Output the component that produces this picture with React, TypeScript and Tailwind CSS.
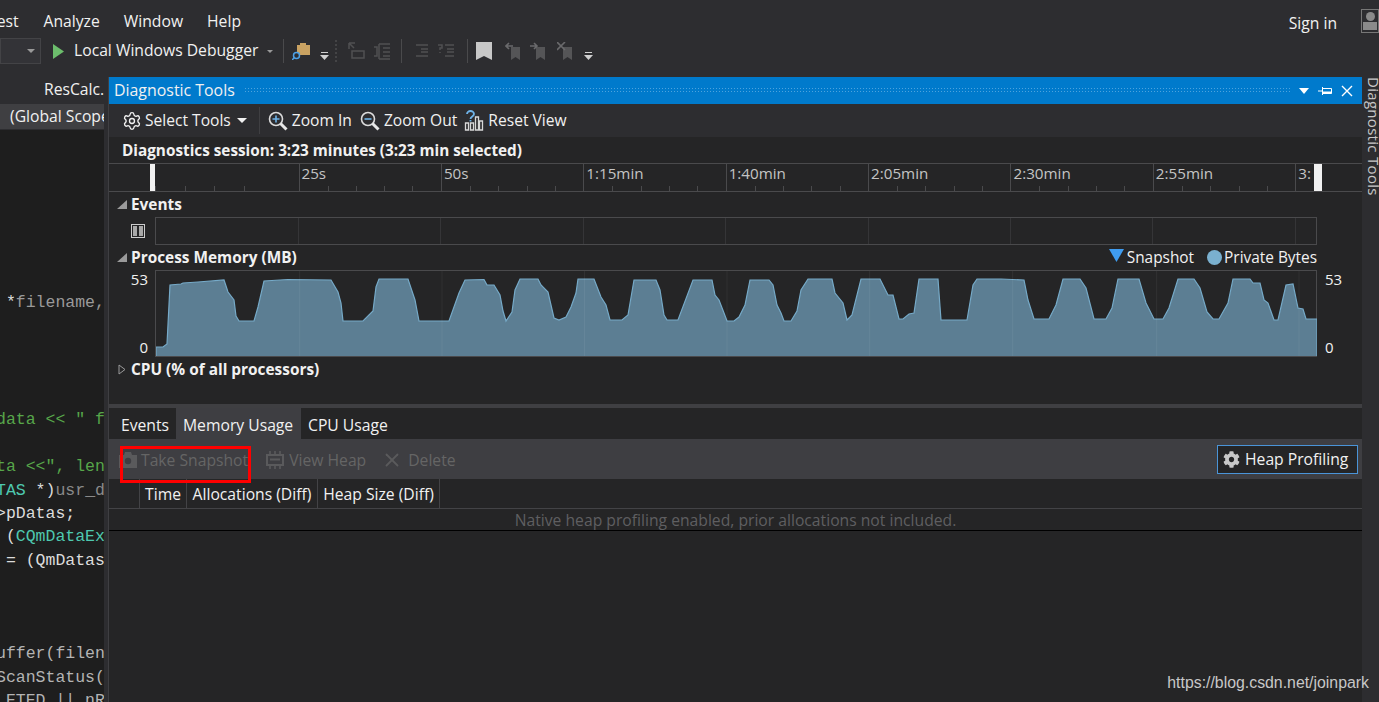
import { Settings, X } from "lucide-react";
import { FaCog } from "react-icons/fa";

const chartPoints =
    "155,356 155,347 162,347 166,344 169,285 180,284 182,283 197,282 223,280 227,292 233,300 235,316 238,321 253,321 257,307 263,281 287,279.5 330,280 337,292 340,303 342,321 362,321 372,311 375,287 378,279 407,279 414,300 418,321 448,321 458,293 464,280 483,279.5 486,285 493,285 499,295 502,311 505,321 511,312 514,290 519,279 537,279 540,285 547,292 553,318 558,320 565,317 570,307 575,293 577,279 593,279 600,297 605,305 609,320 621,320 627,315 633,280 655,280 659,290 663,315 666,320 677,320 692,280 711,280 714,295 718,300 723,313 726,321 733,321 738,317 744,305 749,280 768,280 772,285 776,305 780,313 783,321 790,321 796,311 800,290 807,279 831,279 834,293 842,303 846,320 851,315 860,279 879,279 887,295 892,295 898,319 902,319 908,314 913,313 918,279 937,279 940,320 966,320 972,285 976,279 1000,279 1023,280 1027,300 1033,319 1048,319 1055,305 1062,279 1079,279 1085,288 1093,319 1105,319 1111,308 1117,279 1138,279 1145,303 1153,319 1162,319 1168,308 1177,279 1193,279 1199,288 1206,312 1212,319 1218,319 1227,303 1232,279 1249,279 1252,283 1259,283 1263,300 1267,303 1273,320 1277,320 1285,285 1292,284 1297,308 1302,309 1305,319 1316,319 1316,356";

const rulerLabels = ["25s", "50s", "1:15min", "1:40min", "2:05min", "2:30min", "2:55min", "3:20min"];
const gridLines = [298.7, 441, 583.5, 726, 868.7, 1011.7, 1155.7, 1298];

function MiniCaret() {
    return (
        <svg width="9" height="8" viewBox="0 0 9 8">
            <rect x="1" y="0" width="7" height="1" fill="#d0d0d0" />
            <path d="M0 3h9L4.5 8z" fill="#d0d0d0" />
        </svg>
    );
}

function DimIcon({ d }: { d: string }) {
    return (
        <svg width="18" height="19" viewBox="0 0 18 19" fill="none" stroke="#505052" strokeWidth="1.5">
            <path d={d} />
        </svg>
    );
}

function NavBookmark({ mark }: { mark: string }) {
    return (
        <svg width="16" height="18" viewBox="0 0 16 18">
            <path d="M6 5h9v13l-4.5-3-4.5 3z" fill="#555557" />
            <path d={mark} stroke="#6a6a6c" strokeWidth="1.6" fill="none" />
        </svg>
    );
}

function Magnifier({ mark }: { mark: string }) {
    return (
        <svg width="20" height="20" viewBox="0 0 20 20" fill="none">
            <circle cx="8" cy="8" r="6.5" stroke="#dcdcdc" strokeWidth="1.6" />
            <path d="M12.5 12.5l6 6" stroke="#e8e8e8" strokeWidth="3" />
            <path d={mark} stroke="#6fb3e8" strokeWidth="1.6" />
        </svg>
    );
}

function BlankLines({ count }: { count: number }) {
    return <div style={{ height: count * 23.4 }} />;
}

function TopBars() {
    return (
        <div className="flex flex-col h-[66px] text-[#f1f1f1] text-[15.7px]">
            <div className="flex h-[36px] items-center pt-[8px]">
                <span className="-ml-[12px] mr-[25px]">Test</span>
                <span className="mr-[24px]">Analyze</span>
                <span className="mr-[24px]">Window</span>
                <span>Help</span>
                <span className="ml-auto mr-[24px] mt-[4px]">Sign in</span>
                <div className="w-[18px] h-[24px] -mt-[2px] border border-[#777777] bg-[#2d2d30] overflow-hidden flex flex-col items-center">
                    <div className="w-[9px] h-[9px] rounded-full bg-[#8a8a8a] mt-[2px]" />
                    <div className="w-[14px] h-[8px] bg-[#8a8a8a] mt-[1px]" />
                </div>
            </div>
            <div className="flex h-[30px] items-center">
                <div className="w-[41px] h-[26px] bg-[#333337] border border-[#434346] flex items-center justify-end pr-[5px]">
                    <div className="w-0 h-0 border-l-[4px] border-r-[4px] border-t-[4px] border-l-transparent border-r-transparent border-t-[#999999]" />
                </div>
                <svg width="11" height="15" viewBox="0 0 11 15" className="ml-[12px]">
                    <path d="M0 0l11 7.5L0 15z" fill="#6cbd6c" />
                </svg>
                <span className="ml-[10px] w-[187px] whitespace-nowrap">Local Windows Debugger</span>
                <div className="ml-[6px] w-0 h-0 border-l-[3px] border-r-[3px] border-t-[3px] border-l-transparent border-r-transparent border-t-[#999999]" />
                <div className="ml-[10px] w-px h-[24px] bg-[#4a4a4c]" />
                <svg width="19" height="18" viewBox="0 0 19 18" className="ml-[8px]">
                    <path d="M5 3h3V1h6v2h4v10H5z" fill="#c9a262" />
                    <circle cx="4.5" cy="13.5" r="3" fill="#2d2d30" stroke="#4ea1e6" strokeWidth="1.5" />
                    <path d="M2.5 15.5L0 18" stroke="#4ea1e6" strokeWidth="1.5" />
                </svg>
                <div className="ml-[9px] mt-[10px]">
                    <MiniCaret />
                </div>
                <div className="ml-[6px] w-[3px] h-[22px] border-l-2 border-dotted border-[#444446]" />
                <div className="ml-[9px]">
                    <DimIcon d="M2 1l5 5M2 1v6M2 1h6M5 9h12v7H5z" />
                </div>
                <div className="ml-[8px]">
                    <DimIcon d="M6 2h11M6 2v15M6 17h11M10 6h7M10 10h7M10 14h7M1 5h3v9H1" />
                </div>
                <div className="ml-[10px] w-px h-[24px] bg-[#4a4a4c]" />
                <div className="ml-[11px]">
                    <DimIcon d="M3 3h12M8 7h7M8 10h7M3 14h12" />
                </div>
                <div className="ml-[6px]">
                    <DimIcon d="M1 3h4v3H3v2M3 10v1M8 3h9M10 7h7M10 10h7M8 14h9" />
                </div>
                <div className="ml-[12px] w-px h-[24px] bg-[#4a4a4c]" />
                <svg width="16" height="18" viewBox="0 0 16 18" className="ml-[8px]">
                    <path d="M0 0h16v18l-8-4-8 4z" fill="#c8c8c8" />
                </svg>
                <div className="ml-[13px]">
                    <NavBookmark mark="M8 4H1M4 1L1 4l3 3" />
                </div>
                <div className="ml-[9px]">
                    <NavBookmark mark="M0 4h7M4 1l3 3-3 3" />
                </div>
                <div className="ml-[11px]">
                    <NavBookmark mark="M0 0l8 8M8 0L0 8" />
                </div>
                <div className="ml-[11px] mt-[10px]">
                    <MiniCaret />
                </div>
            </div>
        </div>
    );
}

function CodePane() {
    return (
        <div className="w-[108px] shrink-0 flex flex-col">
            <div className="h-[11px]" />
            <div className="w-[104px] h-[26px] pl-[44px] text-[#f1f1f1] text-[15.7px] whitespace-nowrap overflow-hidden leading-[24px]">
                ResCalc.cpp
            </div>
            <div className="w-[104px] h-[25px] mt-px bg-[#3f3f42] pl-[10px] text-[#f1f1f1] text-[15.7px] whitespace-nowrap overflow-hidden leading-[24px]">
                (Global Scope)
            </div>
            <div className="w-[104px] flex-1 mt-px bg-[#1e1e1e] overflow-hidden pt-[21px] font-['Liberation_Mono',monospace] text-[16.5px] leading-[23.4px] whitespace-pre text-[#dcdcdc]">
                <div className="-ml-[4px]">
                    <BlankLines count={6} />
                    <div>
                        {" "}
                        <span>*</span>
                        <span className="text-[#9a9a9a]">filename,</span>
                    </div>
                    <BlankLines count={4} />
                    <div className="text-[#57a64a]">data &lt;&lt; " f</div>
                    <BlankLines count={1} />
                    <div className="text-[#57a64a]">ta &lt;&lt;", len</div>
                    <div>
                        <span className="text-[#4ec9b0]">TAS</span> *)<span className="text-[#8a8a8a]">usr_d</span>
                    </div>
                    <div>&gt;pDatas;</div>
                    <div>
                        {" ("}
                        <span className="text-[#4ec9b0]">CQmDataEx</span>
                    </div>
                    <div> = (QmDatas</div>
                    <BlankLines count={3} />
                    <div className="text-[#b4b4b4]">uffer(filen</div>
                    <div className="text-[#b4b4b4]">ScanStatus(</div>
                    <div className="text-[#b4b4b4]"> ETED || nR</div>
                </div>
            </div>
        </div>
    );
}

function Ruler() {
    return (
        <div className="relative h-[29px] border-y border-[#4a4a4c] flex pl-[189.5px] text-[#c4c4c4] text-[15.2px] overflow-hidden">
            {rulerLabels.map((label, i) => (
                <div
                    key={label}
                    className={`relative shrink-0 border-l border-[#4a4a4c] pl-[2px] leading-[19px] ${i === 7 ? "w-[16px] overflow-hidden whitespace-nowrap" : "w-[142.4px]"}`}
                >
                    {label}
                    {i < 7 && (
                        <div className="absolute bottom-0 left-[28px] w-[86px] h-[5px] flex justify-between">
                            <div className="w-px bg-[#4a4a4c]" />
                            <div className="w-px bg-[#4a4a4c]" />
                            <div className="w-px bg-[#4a4a4c]" />
                            <div className="w-px bg-[#4a4a4c]" />
                        </div>
                    )}
                </div>
            ))}
            <div className="absolute left-[46px] top-0 bottom-0 w-[90px] flex justify-between items-end">
                <div className="w-px h-[5px] bg-[#4a4a4c]" />
                <div className="w-px h-[5px] bg-[#4a4a4c]" />
                <div className="w-px h-[5px] bg-[#4a4a4c]" />
                <div className="w-px h-[5px] bg-[#4a4a4c]" />
            </div>
            <div className="absolute left-[41px] top-0 bottom-0 w-[5px] bg-[#f1f1f1]" />
            <div className="absolute left-[1205px] top-0 bottom-0 w-[8px] bg-[#f1f1f1]" />
        </div>
    );
}

function SectionHead({ open, label }: { open: boolean; label: string }) {
    return (
        <div className="flex items-center pl-[8px] font-bold text-[15.4px] text-[#f1f1f1]">
            {open ? (
                <svg width="11" height="9" viewBox="0 0 11 9">
                    <path d="M10 0v9H0z" fill="#9a9a9a" />
                </svg>
            ) : (
                <svg width="9" height="11" viewBox="0 0 9 11" className="ml-[1px] mr-px">
                    <path d="M1 1l6 4.5L1 10z" fill="none" stroke="#9a9a9a" />
                </svg>
            )}
            <span className="ml-[3px] whitespace-nowrap">{label}</span>
        </div>
    );
}

function Timeline() {
    return (
        <div className="flex flex-col">
            <div className="h-[25px] flex items-center">
                <SectionHead open label="Events" />
            </div>
            <div className="flex h-[28px]">
                <div className="w-[46px] flex items-center justify-end pr-[10px]">
                    <div className="w-[14px] h-[14px] border border-[#cccccc] flex gap-[2px] p-px bg-[#252526]">
                        <div className="flex-1 bg-[#a8a8a8]" />
                        <div className="flex-1 bg-[#a8a8a8]" />
                    </div>
                </div>
                <div className="w-[1162px] border border-[#4a4a4c] flex">
                    <div className="w-[143px] border-r border-[#353537]" />
                    <div className="w-[142.4px] border-r border-[#353537]" />
                    <div className="w-[142.4px] border-r border-[#353537]" />
                    <div className="w-[142.4px] border-r border-[#353537]" />
                    <div className="w-[142.4px] border-r border-[#353537]" />
                    <div className="w-[142.4px] border-r border-[#353537]" />
                    <div className="w-[142.4px] border-r border-[#353537]" />
                    <div className="w-[142.4px] border-r border-[#353537]" />
                </div>
            </div>
            <div className="h-[25px] flex items-center">
                <SectionHead open label="Process Memory (MB)" />
                <div className="ml-auto mr-[45px] flex items-center text-[15.4px] text-[#f1f1f1]">
                    <svg width="15" height="13" viewBox="0 0 15 13" className="-mt-[3px]">
                        <path d="M0 0h15L7.5 13z" fill="#3f9cf0" />
                    </svg>
                    <span className="ml-[3px]">Snapshot</span>
                    <div className="ml-[13px] w-[15px] h-[15px] rounded-full bg-[#7ab0cf]" />
                    <span className="ml-[2px]">Private Bytes</span>
                </div>
            </div>
            <div className="flex h-[87px] text-[15px] text-[#f1f1f1]">
                <div className="w-[46px] flex flex-col justify-between items-end pr-[7px]">
                    <span className="leading-[18px]">53</span>
                    <span className="leading-[18px] mb-[1px]">0</span>
                </div>
                <div className="w-[1162px] border-y border-x border-[#4a4a4c]">
                    <svg width="1161" height="85" viewBox="155 271 1161 85" className="block">
                        <polygon points={chartPoints} fill="#5c7e93" stroke="none" />
                        <polyline points={chartPoints} fill="none" stroke="#76aac8" strokeWidth="1.2" />
                        {gridLines.map((x) => (
                            <line key={x} x1={x} x2={x} y1={271} y2={356} stroke="#ffffff" strokeOpacity="0.06" />
                        ))}
                    </svg>
                </div>
                <div className="flex flex-col justify-between pl-[8px]">
                    <span className="leading-[18px]">53</span>
                    <span className="leading-[18px] mb-[1px]">0</span>
                </div>
            </div>
            <div className="h-[26px] flex items-center">
                <SectionHead open={false} label="CPU (% of all processors)" />
            </div>
        </div>
    );
}

function DetailPane() {
    return (
        <div className="flex-1 flex flex-col">
            <div className="h-[31px] flex text-[15.7px] text-[#f1f1f1] leading-[35px]">
                <div className="w-[67px] pl-[12px]">Events</div>
                <div className="w-[125px] bg-[#3e3e42] pl-[7px] whitespace-nowrap">Memory Usage</div>
                <div className="pl-[7px]">CPU Usage</div>
            </div>
            <div className="relative h-[40px] bg-[#3e3e42] flex items-center pl-[10px] text-[15.7px] text-[#656565]">
                <svg width="18" height="16" viewBox="0 0 18 16" className="mt-[2px]">
                    <path d="M0 3h5l1-3h6l1 3h5v13H0z" fill="#5a5a5c" />
                    <circle cx="9" cy="9" r="3.2" fill="#3e3e42" />
                </svg>
                <span className="ml-[4px] mt-[4px] whitespace-nowrap">Take Snapshot</span>
                <svg width="18" height="18" viewBox="0 0 18 18" fill="none" stroke="#5a5a5c" className="ml-[18px] mt-[2px]">
                    <rect x="1" y="4" width="16" height="10" strokeWidth="2" />
                    <path d="M4 8.500h10" strokeWidth="2" />
                    <path d="M4 0v4M9 0v4M14 0v4M4 14v4M9 14v4M14 14v4" strokeWidth="1.6" />
                </svg>
                <span className="ml-[5px] mt-[4px] whitespace-nowrap">View Heap</span>
                <X size={22} strokeWidth={2} className="ml-[15px] mt-[2px] text-[#5a5a5c]" />
                <span className="ml-[5px] mt-[4px]">Delete</span>
                <div className="ml-auto mr-[4px] w-[141px] h-[29px] bg-[#252526] border border-[#4a94d8] flex items-center pl-[5px] text-[15.7px] text-[#f1f1f1] whitespace-nowrap">
                    <FaCog size={17} className="text-[#c8c8c8]" />
                    <span className="ml-[5px] mt-[2px]">Heap Profiling</span>
                </div>
                <div className="absolute left-[11px] top-[7px] w-[131px] h-[37px] border-[3px] border-[#ff0000]" />
            </div>
            <div className="h-[30px] flex border-b border-[#434346] text-[15.7px] text-[#f1f1f1] leading-[31px]">
                <div className="w-[31px] border-r border-[#434346]" />
                <div className="w-[47px] border-r border-[#434346] text-center">Time</div>
                <div className="w-[131px] border-r border-[#434346] text-center whitespace-nowrap">Allocations (Diff)</div>
                <div className="w-[122px] border-r border-[#434346] text-center whitespace-nowrap">Heap Size (Diff)</div>
            </div>
            <div className="h-[22px] border-b border-black text-center text-[15.7px] text-[#5f5f61] leading-[23px]">
                Native heap profiling enabled, prior allocations not included.
            </div>
        </div>
    );
}

export default function App() {
    return (
        <div className="relative w-[1379px] h-[702px] bg-[#2d2d30] overflow-hidden flex flex-col font-['Open_Sans','Noto_Sans',sans-serif]">
            <TopBars />
            <div className="flex flex-1 min-h-0">
                <CodePane />
                <div className="mt-[11px] w-[1254px] shrink-0 flex flex-col bg-[#252526] border-l border-[#3f3f42]">
                    <div className="h-[27px] bg-[#007acc] flex items-center pl-[5px] text-[15.9px] text-[#f1f1f1]">
                        <span className="whitespace-nowrap">Diagnostic Tools</span>
                        <div className="ml-[9px] flex-1 h-[7px] bg-[radial-gradient(#4da3de_1px,transparent_1px)] bg-[length:3px_3px]" />
                        <svg width="10" height="6" viewBox="0 0 10 6" className="ml-[9px]">
                            <path d="M0 0h10L5 6z" fill="#ffffff" />
                        </svg>
                        <svg width="14" height="10" viewBox="0 0 14 10" className="ml-[9px]" fill="none" stroke="#ffffff">
                            <path d="M0 5h4M4.500 1v8" />
                            <path d="M5 2.500h8.500v5H5" />
                            <path d="M5 6.500h8.500" strokeWidth="2" />
                        </svg>
                        <svg width="12" height="12" viewBox="0 0 12 12" className="ml-[9px] mr-[9px]" fill="none" stroke="#ffffff" strokeWidth="1.4">
                            <path d="M1 1l10 10M11 1L1 11" />
                        </svg>
                    </div>
                    <div className="h-[33px] bg-[#2d2d30] flex items-center pl-[13px] text-[15.6px] text-[#f1f1f1]">
                        <Settings size={20} strokeWidth={1.6} />
                        <span className="ml-[3px] whitespace-nowrap">Select Tools</span>
                        <div className="ml-[6px] w-0 h-0 border-l-[5px] border-r-[5px] border-t-[5px] border-l-transparent border-r-transparent border-t-[#f1f1f1]" />
                        <div className="ml-[12px] w-px h-[27px] bg-[#3f3f42]" />
                        <div className="ml-[8px]">
                            <Magnifier mark="M4.500 8h7M8 4.500v7" />
                        </div>
                        <span className="ml-[4px] whitespace-nowrap">Zoom In</span>
                        <div className="ml-[8px]">
                            <Magnifier mark="M4.500 8h7" />
                        </div>
                        <span className="ml-[4px] whitespace-nowrap">Zoom Out</span>
                        <svg width="20" height="21" viewBox="0 0 20 21" fill="none" stroke="#d8d8d8" strokeWidth="1.3" className="ml-[7px]">
                            <path d="M3 4a3.500 3 0 0 1 7 0c0 2.500-3.500 2.500-3.500 5M6.500 10v1.500" stroke="#6fb3e8" strokeWidth="1.8" />
                            <path d="M1.500 13h3v7h-3zM6.500 13h3v7h-3zM11.500 7h3v13h-3zM15.500 11h3v9h-3z" />
                        </svg>
                        <span className="ml-[4px] whitespace-nowrap">Reset View</span>
                    </div>
                    <div className="h-[26px] pl-[13px] font-bold text-[15.3px] text-[#f1f1f1] leading-[27px] whitespace-nowrap">
                        Diagnostics session: 3:23 minutes (3:23 min selected)
                    </div>
                    <Ruler />
                    <Timeline />
                    <div className="h-[21px]" />
                    <div className="h-[4px] bg-[#3f3f42]" />
                    <DetailPane />
                </div>
                <div className="flex-1 pt-[11px] text-[15px] text-[#c8c8c8] tracking-[0.3px]">
                    <span className="[writing-mode:vertical-rl] whitespace-nowrap">Diagnostic Tools</span>
                </div>
            </div>
            <div className="absolute right-[10px] bottom-[7px] font-['Liberation_Sans',sans-serif] text-[15.85px] text-[#c8c8c8]">
                https://blog.csdn.net/joinpark
            </div>
        </div>
    );
}
